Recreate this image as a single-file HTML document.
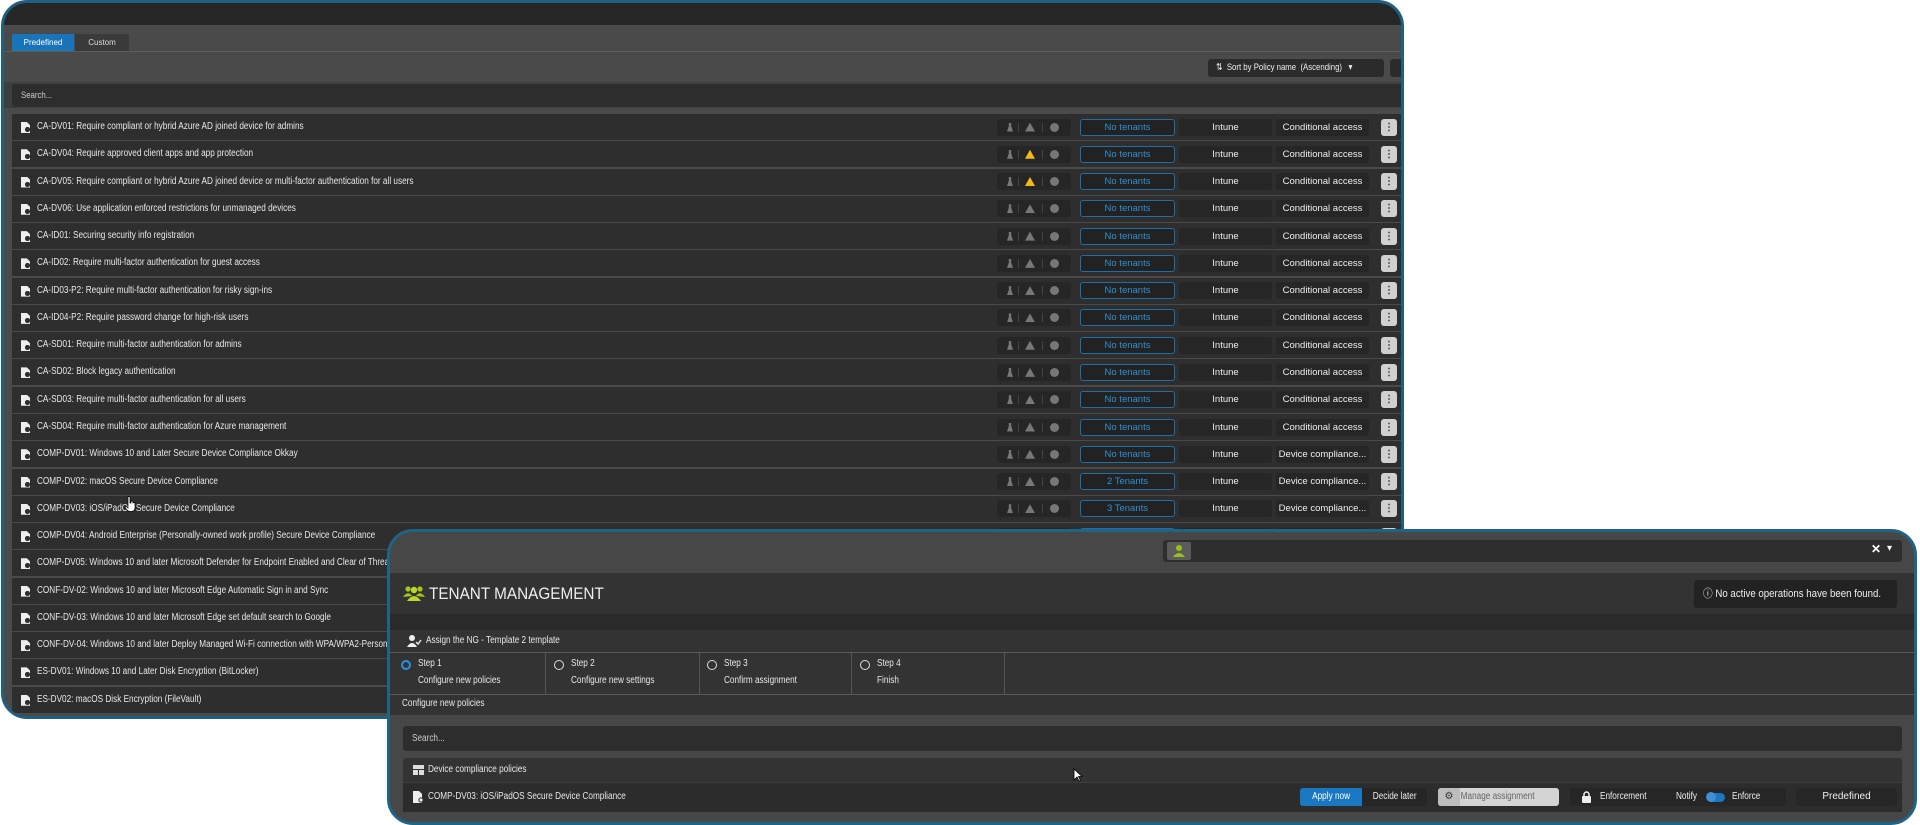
<!DOCTYPE html>
<html><head><meta charset="utf-8">
<style>
*{box-sizing:border-box;margin:0;padding:0}
body{width:1920px;height:825px;background:#fff;position:relative;overflow:hidden;font-family:"Liberation Sans",sans-serif;color:#e8e8e8}
.abs{position:absolute}
.p1{position:absolute;left:1px;top:0;width:1403px;height:719px;border:3px solid #1f5f80;border-radius:26px;overflow:hidden;background:#4a4a4a}
.p2{position:absolute;left:387px;top:529px;width:1530px;height:296px;border:3px solid #1f6385;border-radius:26px;overflow:hidden;background:#474747}
.t{display:inline-block;transform:scaleX(.82);transform-origin:0 50%;white-space:nowrap}
.row{position:absolute;left:8px;width:1400px;height:26px;background:#2e2e2e;font-size:10px;line-height:26px}
.ic{position:absolute;left:9px;top:8px;width:9px;height:11px;background:#eee;clip-path:polygon(0 0,65% 0,100% 28%,100% 100%,0 100%)}
.ic:after{content:"";position:absolute;left:4px;top:5px;width:5px;height:5px;border-radius:50%;background:#2e2e2e;box-shadow:inset 0 0 0 1px #2e2e2e}
.tx{position:absolute;left:25px;top:0}
.box{position:absolute;top:4.5px;height:17px;border-radius:3px;background:#262626;font-size:9.5px;line-height:17px;text-align:center;color:#eee}
.grp{left:985px;width:74px}
.grp i{position:absolute;top:4px}
.fl{left:10px;width:6px;height:9px;background:#777;clip-path:polygon(30% 0,70% 0,70% 40%,100% 100%,0 100%,30% 40%)}
.tr{left:28px;width:10px;height:9px;background:#777;clip-path:polygon(50% 0,100% 100%,0 100%)}
.tr.w{background:#f2b91b}
.in{left:53px;width:9px;height:9px;border-radius:50%;background:#777}
.sp{width:1px;height:9px;background:#444}
.ten{left:1068px;width:95px;background:#222;border:1px solid #1e6fa8;color:#2f8fd2;line-height:15px}
.int{left:1167px;width:93px}
.cat{left:1264px;width:93px}
.keb{left:1369px;width:16px;background:#d0d0d0;color:#333;font-weight:bold;font-size:10px}
.btn{position:absolute;height:18px;line-height:18px;font-size:10px;text-align:center;border-radius:3px}
</style></head><body>

<div class="p1">
  <div class="abs" style="left:0;top:0;width:1400px;height:22px;background:#262626"></div>
  <div class="abs" style="left:8px;top:31px;width:62px;height:17px;background:#1a74ba;font-size:8px;line-height:17px;text-align:center;color:#fff">Predefined</div>
  <div class="abs" style="left:71px;top:31px;width:54px;height:17px;background:#3a3a3a;font-size:8px;line-height:17px;text-align:center;color:#ddd">Custom</div>
  <div class="abs" style="left:0;top:48px;width:1400px;height:1px;background:#5c5c5c"></div>
  <div class="abs" style="left:1204px;top:56px;width:176px;height:18px;background:#2b2b2b;border-radius:3px;font-size:9.5px;line-height:18px;color:#eee;padding-left:8px"><span class="t">⇅&nbsp; Sort by Policy name &nbsp;(Ascending) &nbsp;&nbsp;▾</span></div>
  <div class="abs" style="left:1386px;top:56px;width:20px;height:18px;background:#2b2b2b;border-radius:3px"></div>
  <div class="abs" style="left:0;top:79px;width:1400px;height:26px;background:#3e3e3e"></div>
  <div class="abs" style="left:8px;top:81px;width:1400px;height:23px;background:#2d2d2d;border-radius:3px;font-size:9.5px;line-height:23px;color:#ccc;padding-left:9px"><span class="t">Search...</span></div>

<div class="row" style="top:111px"><span class="ic"></span><span class="tx"><span class="t">CA-DV01: Require compliant or hybrid Azure AD joined device for admins</span></span><div class="box grp"><i class="fl"></i><i class="sp" style="left:21px"></i><i class="tr"></i><i class="sp" style="left:45px"></i><i class="in"></i></div><div class="box ten">No tenants</div><div class="box int">Intune</div><div class="box cat">Conditional access</div><div class="box keb">⋮</div></div>
<div class="row" style="top:138.3px"><span class="ic"></span><span class="tx"><span class="t">CA-DV04: Require approved client apps and app protection</span></span><div class="box grp"><i class="fl"></i><i class="sp" style="left:21px"></i><i class="tr w"></i><i class="sp" style="left:45px"></i><i class="in"></i></div><div class="box ten">No tenants</div><div class="box int">Intune</div><div class="box cat">Conditional access</div><div class="box keb">⋮</div></div>
<div class="row" style="top:165.5px"><span class="ic"></span><span class="tx"><span class="t">CA-DV05: Require compliant or hybrid Azure AD joined device or multi-factor authentication for all users</span></span><div class="box grp"><i class="fl"></i><i class="sp" style="left:21px"></i><i class="tr w"></i><i class="sp" style="left:45px"></i><i class="in"></i></div><div class="box ten">No tenants</div><div class="box int">Intune</div><div class="box cat">Conditional access</div><div class="box keb">⋮</div></div>
<div class="row" style="top:192.8px"><span class="ic"></span><span class="tx"><span class="t">CA-DV06: Use application enforced restrictions for unmanaged devices</span></span><div class="box grp"><i class="fl"></i><i class="sp" style="left:21px"></i><i class="tr"></i><i class="sp" style="left:45px"></i><i class="in"></i></div><div class="box ten">No tenants</div><div class="box int">Intune</div><div class="box cat">Conditional access</div><div class="box keb">⋮</div></div>
<div class="row" style="top:220.1px"><span class="ic"></span><span class="tx"><span class="t">CA-ID01: Securing security info registration</span></span><div class="box grp"><i class="fl"></i><i class="sp" style="left:21px"></i><i class="tr"></i><i class="sp" style="left:45px"></i><i class="in"></i></div><div class="box ten">No tenants</div><div class="box int">Intune</div><div class="box cat">Conditional access</div><div class="box keb">⋮</div></div>
<div class="row" style="top:247.4px"><span class="ic"></span><span class="tx"><span class="t">CA-ID02: Require multi-factor authentication for guest access</span></span><div class="box grp"><i class="fl"></i><i class="sp" style="left:21px"></i><i class="tr"></i><i class="sp" style="left:45px"></i><i class="in"></i></div><div class="box ten">No tenants</div><div class="box int">Intune</div><div class="box cat">Conditional access</div><div class="box keb">⋮</div></div>
<div class="row" style="top:274.6px"><span class="ic"></span><span class="tx"><span class="t">CA-ID03-P2: Require multi-factor authentication for risky sign-ins</span></span><div class="box grp"><i class="fl"></i><i class="sp" style="left:21px"></i><i class="tr"></i><i class="sp" style="left:45px"></i><i class="in"></i></div><div class="box ten">No tenants</div><div class="box int">Intune</div><div class="box cat">Conditional access</div><div class="box keb">⋮</div></div>
<div class="row" style="top:301.9px"><span class="ic"></span><span class="tx"><span class="t">CA-ID04-P2: Require password change for high-risk users</span></span><div class="box grp"><i class="fl"></i><i class="sp" style="left:21px"></i><i class="tr"></i><i class="sp" style="left:45px"></i><i class="in"></i></div><div class="box ten">No tenants</div><div class="box int">Intune</div><div class="box cat">Conditional access</div><div class="box keb">⋮</div></div>
<div class="row" style="top:329.2px"><span class="ic"></span><span class="tx"><span class="t">CA-SD01: Require multi-factor authentication for admins</span></span><div class="box grp"><i class="fl"></i><i class="sp" style="left:21px"></i><i class="tr"></i><i class="sp" style="left:45px"></i><i class="in"></i></div><div class="box ten">No tenants</div><div class="box int">Intune</div><div class="box cat">Conditional access</div><div class="box keb">⋮</div></div>
<div class="row" style="top:356.4px"><span class="ic"></span><span class="tx"><span class="t">CA-SD02: Block legacy authentication</span></span><div class="box grp"><i class="fl"></i><i class="sp" style="left:21px"></i><i class="tr"></i><i class="sp" style="left:45px"></i><i class="in"></i></div><div class="box ten">No tenants</div><div class="box int">Intune</div><div class="box cat">Conditional access</div><div class="box keb">⋮</div></div>
<div class="row" style="top:383.7px"><span class="ic"></span><span class="tx"><span class="t">CA-SD03: Require multi-factor authentication for all users</span></span><div class="box grp"><i class="fl"></i><i class="sp" style="left:21px"></i><i class="tr"></i><i class="sp" style="left:45px"></i><i class="in"></i></div><div class="box ten">No tenants</div><div class="box int">Intune</div><div class="box cat">Conditional access</div><div class="box keb">⋮</div></div>
<div class="row" style="top:411px"><span class="ic"></span><span class="tx"><span class="t">CA-SD04: Require multi-factor authentication for Azure management</span></span><div class="box grp"><i class="fl"></i><i class="sp" style="left:21px"></i><i class="tr"></i><i class="sp" style="left:45px"></i><i class="in"></i></div><div class="box ten">No tenants</div><div class="box int">Intune</div><div class="box cat">Conditional access</div><div class="box keb">⋮</div></div>
<div class="row" style="top:438.2px"><span class="ic"></span><span class="tx"><span class="t">COMP-DV01: Windows 10 and Later Secure Device Compliance Okkay</span></span><div class="box grp"><i class="fl"></i><i class="sp" style="left:21px"></i><i class="tr"></i><i class="sp" style="left:45px"></i><i class="in"></i></div><div class="box ten">No tenants</div><div class="box int">Intune</div><div class="box cat">Device compliance...</div><div class="box keb">⋮</div></div>
<div class="row" style="top:465.5px"><span class="ic"></span><span class="tx"><span class="t">COMP-DV02: macOS Secure Device Compliance</span></span><div class="box grp"><i class="fl"></i><i class="sp" style="left:21px"></i><i class="tr"></i><i class="sp" style="left:45px"></i><i class="in"></i></div><div class="box ten">2 Tenants</div><div class="box int">Intune</div><div class="box cat">Device compliance...</div><div class="box keb">⋮</div></div>
<div class="row" style="top:492.8px"><span class="ic"></span><span class="tx"><span class="t">COMP-DV03: iOS/iPadOS Secure Device Compliance</span></span><div class="box grp"><i class="fl"></i><i class="sp" style="left:21px"></i><i class="tr"></i><i class="sp" style="left:45px"></i><i class="in"></i></div><div class="box ten">3 Tenants</div><div class="box int">Intune</div><div class="box cat">Device compliance...</div><div class="box keb">⋮</div></div>
<div class="row" style="top:520.1px"><span class="ic"></span><span class="tx"><span class="t">COMP-DV04: Android Enterprise (Personally-owned work profile) Secure Device Compliance</span></span><div class="box grp"></div><div class="box ten">No tenants</div><div class="box int">Intune</div><div class="box cat"></div><div class="box keb">⋮</div></div>
<div class="row" style="top:547.3px"><span class="ic"></span><span class="tx"><span class="t">COMP-DV05: Windows 10 and later Microsoft Defender for Endpoint Enabled and Clear of Threats</span></span></div>
<div class="row" style="top:574.6px"><span class="ic"></span><span class="tx"><span class="t">CONF-DV-02: Windows 10 and later Microsoft Edge Automatic Sign in and Sync</span></span></div>
<div class="row" style="top:601.9px"><span class="ic"></span><span class="tx"><span class="t">CONF-DV-03: Windows 10 and later Microsoft Edge set default search to Google</span></span></div>
<div class="row" style="top:629.1px"><span class="ic"></span><span class="tx"><span class="t">CONF-DV-04: Windows 10 and later Deploy Managed Wi-Fi connection with WPA/WPA2-Personal</span></span></div>
<div class="row" style="top:656.4px"><span class="ic"></span><span class="tx"><span class="t">ES-DV01: Windows 10 and Later Disk Encryption (BitLocker)</span></span></div>
<div class="row" style="top:683.7px"><span class="ic"></span><span class="tx"><span class="t">ES-DV02: macOS Disk Encryption (FileVault)</span></span></div>
</div>

<div class="p2">
  <div class="abs" style="left:773px;top:8px;width:739px;height:22px;background:#2e2e2e;border-radius:3px"></div>
  <div class="abs" style="left:777px;top:10px;width:24px;height:18px;background:#5b5b5b;border-radius:2px">
    <svg width="24" height="18" viewBox="0 0 24 18"><circle cx="12" cy="6" r="3" fill="#9bbf1a"/><path d="M6 15 Q12 7 18 15Z" fill="#9bbf1a"/></svg>
  </div>
  <div class="abs" style="left:1481px;top:10px;font-size:12px;color:#fff;font-weight:bold">✕</div>
  <div class="abs" style="left:1497px;top:11px;font-size:10px;color:#fff">▾</div>
  <div class="abs" style="left:0;top:41px;width:1530px;height:41px;background:#333"></div>
  <svg class="abs" style="left:12px;top:52px" width="24" height="18" viewBox="0 0 24 18"><circle cx="6" cy="5" r="2.6" fill="#a5c81c"/><circle cx="18" cy="5" r="2.6" fill="#a5c81c"/><circle cx="12" cy="6" r="3.2" fill="#b8d82a"/><path d="M1 13 Q6 6 10 12Z M14 12 Q18 6 23 13Z" fill="#a5c81c"/><path d="M5 17 Q12 7 19 17Z" fill="#b8d82a"/></svg>
  <div class="abs" style="left:39px;top:51px;font-size:17px;line-height:22px;color:#eee"><span class="t" style="transform:scaleX(.9)">TENANT MANAGEMENT</span></div>
  <div class="abs" style="left:1304px;top:48px;width:203px;height:28px;background:#222;border-radius:3px;font-size:11px;line-height:28px;color:#eee;padding-left:9px"><span class="t" style="transform:scaleX(.88)">&#9432; No active operations have been found.</span></div>
  <div class="abs" style="left:0;top:82px;width:1530px;height:16px;background:#2a2a2a"></div>
  <div class="abs" style="left:0;top:98px;width:1530px;height:22px;background:#333"></div>
  <svg class="abs" style="left:16px;top:102px" width="16" height="14" viewBox="0 0 16 14"><circle cx="6" cy="4" r="3" fill="#eee"/><path d="M1 13 Q6 5 11 13Z" fill="#eee"/><path d="M10 8 L12 10 L15 6" stroke="#eee" stroke-width="1.4" fill="none"/></svg>
  <div class="abs" style="left:36px;top:98px;font-size:10px;line-height:22px"><span class="t">Assign the NG - Template 2 template</span></div>
  <div class="abs" style="left:0;top:120px;width:1530px;height:1px;background:#5a5a5a"></div>
  <div class="abs" style="left:0;top:121px;width:1530px;height:41px;background:#333"></div>
  <div class="abs" style="left:0;top:162px;width:1530px;height:1px;background:#5a5a5a"></div>
  <div class="abs" style="left:155px;top:121px;width:1px;height:41px;background:#555"></div>
  <div class="abs" style="left:309px;top:121px;width:1px;height:41px;background:#555"></div>
  <div class="abs" style="left:461px;top:121px;width:1px;height:41px;background:#555"></div>
  <div class="abs" style="left:614px;top:121px;width:1px;height:41px;background:#555"></div>
  <div class="abs" style="left:11px;top:128px;width:10px;height:10px;border-radius:50%;border:2.5px solid #2a90e0"></div>
  <div class="abs" style="left:28px;top:126px;font-size:10px"><span class="t">Step 1</span></div>
  <div class="abs" style="left:28px;top:143px;font-size:10px"><span class="t">Configure new policies</span></div>
  <div class="abs" style="left:164px;top:128px;width:10px;height:10px;border-radius:50%;border:1px solid #ddd"></div>
  <div class="abs" style="left:181px;top:126px;font-size:10px"><span class="t">Step 2</span></div>
  <div class="abs" style="left:181px;top:143px;font-size:10px"><span class="t">Configure new settings</span></div>
  <div class="abs" style="left:317px;top:128px;width:10px;height:10px;border-radius:50%;border:1px solid #ddd"></div>
  <div class="abs" style="left:334px;top:126px;font-size:10px"><span class="t">Step 3</span></div>
  <div class="abs" style="left:334px;top:143px;font-size:10px"><span class="t">Confirm assignment</span></div>
  <div class="abs" style="left:470px;top:128px;width:10px;height:10px;border-radius:50%;border:1px solid #ddd"></div>
  <div class="abs" style="left:487px;top:126px;font-size:10px"><span class="t">Step 4</span></div>
  <div class="abs" style="left:487px;top:143px;font-size:10px"><span class="t">Finish</span></div>
  <div class="abs" style="left:0;top:163px;width:1530px;height:20px;background:#333"></div>
  <div class="abs" style="left:12px;top:166px;font-size:10px"><span class="t">Configure new policies</span></div>
  <div class="abs" style="left:13px;top:194px;width:1499px;height:25px;background:#2d2d2d;border-radius:3px;font-size:10px;line-height:25px;color:#ccc;padding-left:9px"><span class="t">Search...</span></div>
  <div class="abs" style="left:13px;top:226px;width:1499px;height:24px;background:#333;border-radius:3px 3px 0 0"></div>
  <svg class="abs" style="left:23px;top:233px" width="11" height="10" viewBox="0 0 11 10"><rect x="0" y="0" width="11" height="4" fill="#ddd"/><rect x="0" y="5" width="5" height="5" fill="#ddd"/><rect x="6" y="5" width="5" height="5" fill="#ddd"/></svg>
  <div class="abs" style="left:38px;top:226px;font-size:10px;line-height:24px"><span class="t">Device compliance policies</span></div>
  <div class="abs" style="left:13px;top:250px;width:1499px;height:30px;background:#2c2c2c;border-top:1px solid #3c3c3c"></div>
  <svg class="abs" style="left:23px;top:259px" width="11" height="12" viewBox="0 0 11 12"><path d="M0 0H6L9 3V12H0Z" fill="#eee"/><circle cx="8" cy="9" r="2.6" fill="#2c2c2c"/><circle cx="8" cy="9" r="1.6" fill="#eee"/></svg>
  <div class="abs" style="left:38px;top:250px;font-size:10px;line-height:30px"><span class="t">COMP-DV03: iOS/iPadOS Secure Device Compliance</span></div>
  <div class="btn" style="left:910px;top:256px;width:62px;background:#1a78c2;color:#fff;border-radius:3px 0 0 3px"><span class="t" style="transform-origin:50% 50%">Apply now</span></div>
  <div class="btn" style="left:972px;top:256px;width:65px;background:#262626;color:#eee;border-radius:0 3px 3px 0"><span class="t" style="transform-origin:50% 50%">Decide later</span></div>
  <div class="btn" style="left:1048px;top:256px;width:121px;background:#d4d4d4;color:#666"><span style="position:absolute;left:0;top:0;width:22px;height:18px;background:#bdbdbd;color:#333;border-radius:3px 0 0 3px">⚙</span><span class="t" style="padding-left:24px">Manage assignment</span></div>
  <div class="btn" style="left:1180px;top:256px;width:216px;background:#262626;color:#eee;text-align:left">
    <svg style="position:absolute;left:12px;top:3px" width="9" height="12" viewBox="0 0 9 12"><path d="M2 5V3.5a2.5 2.5 0 0 1 5 0V5" stroke="#eee" stroke-width="1.5" fill="none"/><rect x="0" y="5" width="9" height="7" rx="1" fill="#eee"/></svg>
    <span class="t" style="position:absolute;left:30px">Enforcement</span>
    <span class="t" style="position:absolute;left:106px">Notify</span>
    <span style="position:absolute;left:137px;top:5px;width:18px;height:9px;border-radius:5px;background:#1a78c2"></span>
    <span style="position:absolute;left:136px;top:4px;width:10px;height:10px;border-radius:50%;background:#3d8fd6"></span>
    <span class="t" style="position:absolute;left:162px">Enforce</span>
  </div>
  <div class="btn" style="left:1406px;top:256px;width:101px;background:#262626;color:#eee">Predefined</div>
  <svg class="abs" style="left:683px;top:236px" width="10" height="14" viewBox="0 0 10 14"><path d="M1 1V12L4 9L6 13L7.5 12.3L5.5 8.5H9Z" fill="#fff" stroke="#000" stroke-width=".8"/></svg>
</div>
<svg class="abs" style="left:124px;top:496px" width="12" height="16" viewBox="0 0 12 16"><path d="M4 1.5a1 1 0 0 1 2 0V7h1V6a1 1 0 0 1 2 0v1.5a1 1 0 0 1 2 0V12c0 2-1.5 3.5-3.5 3.5H6C4 15.5 2 13 1 11L2 10l2 2Z" fill="#fff" stroke="#000" stroke-width=".7"/></svg>
</body></html>
